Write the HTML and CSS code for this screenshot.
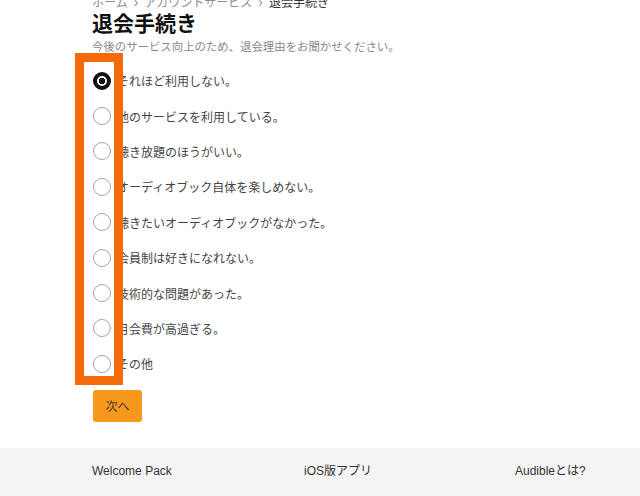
FILE: index.html
```html
<!DOCTYPE html>
<html lang="ja">
<head>
    <meta charset="UTF-8">
    <meta name="viewport" content="width=device-width, initial-scale=1.0">
    <title>退会手続き</title>
    <link rel="stylesheet" href="styles.css">
</head>
<body>
    <div class="page">
        <div class="crumbs">ホーム<span class="sep">›</span>アカウントサービス<span class="sep">›</span><span class="current">退会手続き</span></div>
        <h1>退会手続き</h1>
        <p class="lead">今後のサービス向上のため、退会理由をお聞かせください。</p>

        <ul class="reasons">
            <li><span class="radio checked"></span>それほど利用しない。</li>
            <li><span class="radio"></span>他のサービスを利用している。</li>
            <li><span class="radio"></span>聴き放題のほうがいい。</li>
            <li><span class="radio"></span>オーディオブック自体を楽しめない。</li>
            <li><span class="radio"></span>聴きたいオーディオブックがなかった。</li>
            <li><span class="radio"></span>会員制は好きになれない。</li>
            <li><span class="radio"></span>技術的な問題があった。</li>
            <li><span class="radio"></span>月会費が高過ぎる。</li>
            <li><span class="radio"></span>その他</li>
        </ul>

        <button class="next">次へ</button>
    </div>

    <footer class="footer">
        <a>Welcome Pack</a>
        <a>iOS版アプリ</a>
        <a>Audibleとは?</a>
        <a>Audible Station</a>
        <a>Android版アプリ</a>
        <a>Audibleヒストリー</a>
    </footer>

    <!-- 注釈の枠 -->
    <div class="highlight"></div>
</body>
</html>
```

FILE: styles.css
```css
body {
    margin: 0;
    position: relative;
    font-family: "Liberation Sans", "Noto Sans CJK JP", sans-serif;
    color: #333;
    background: #fff;
    overflow: hidden;
}

.page {
    padding-left: 92px;
    margin-top: -6px;
}

.crumbs {
    font-size: 12px;
    line-height: 16px;
    color: #8a8f96;
}

.crumbs .sep {
    margin: 0 6px;
    font-size: 14px;
}

.crumbs .current {
    color: #333;
}

h1 {
    margin: 0;
    font-size: 21px;
    line-height: 26px;
    font-weight: bold;
    color: #111;
}

.lead {
    margin: 2px 0 0;
    font-size: 11.4px;
    line-height: 16px;
    color: #888;
}

.reasons {
    list-style: none;
    margin: 8px 0 0;
    padding: 0;
}

.reasons li {
    display: flex;
    align-items: center;
    gap: 6px;
    height: 35.4px;
    font-size: 12px;
    color: #444;
}

.radio {
    box-sizing: border-box;
    width: 18px;
    height: 18px;
    margin-left: 1px;
    border: 1.5px solid #a5a5a5;
    border-radius: 50%;
    background: #fff;
    flex-shrink: 0;
}

.radio.checked {
    border: 4px solid #111;
    background: radial-gradient(circle, #111 0 3px, #fff 3.5px);
}

.next {
    display: block;
    margin: 8px 0 0 1px;
    width: 49px;
    height: 32px;
    border: none;
    border-radius: 3px;
    background: #f7981f;
    color: #4a3a2a;
    font-family: inherit;
    font-size: 12px;
}

.footer {
    margin-top: 26px;
    background: #f4f4f5;
    padding: 14px 0 0 92px;
    display: grid;
    grid-template-columns: 212px 211px 120px;
    row-gap: 6px;
    font-size: 12px;
    line-height: 18px;
    height: 60px;
}

.highlight {
    position: absolute;
    left: 75px;
    top: 53px;
    width: 30px;
    height: 314px;
    border: 9px solid #f56a0a;
}
```
